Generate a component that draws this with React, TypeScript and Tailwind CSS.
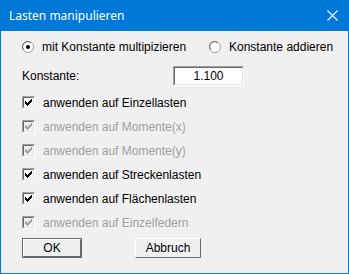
import React from 'react';

const font = { fontFamily: '"Liberation Sans", Arial, sans-serif' };

function CheckMark({ color }: { color: string }) {
  return (
    <svg width="7" height="7" viewBox="0 0 7 7" shapeRendering="crispEdges">
      <path d="M0 2h1v1h1v1h1v-1h1v-1h1v-1h1v-1h1v3h-1v1h-1v1h-1v1h-1v1h-1v-1h-1v-1h-1v-1h-1z" fill={color} />
    </svg>
  );
}

function Checkbox({ label, checked = true, disabled = false }: { label: string; checked?: boolean; disabled?: boolean }) {
  return (
    <div className="flex items-center h-[13px]">
      <div className="w-[13px] h-[13px] border border-[#a0a0a0] border-r-white border-b-white">
        <div
          className={`w-full h-full border border-[#696969] border-r-[#e3e3e3] border-b-[#e3e3e3] flex items-center justify-center ${
            disabled ? 'bg-[#f0f0f0]' : 'bg-white'
          }`}
        >
          {checked && <CheckMark color={disabled ? '#a0a0a0' : '#000'} />}
        </div>
      </div>
      <span className={`ml-[8px] text-[12px] leading-none ${disabled ? 'text-[#a0a0a0]' : 'text-black'}`}>{label}</span>
    </div>
  );
}

function Radio({ label, selected = false }: { label: string; selected?: boolean }) {
  return (
    <div className="flex items-center h-[12px]">
      <svg width="12" height="12" viewBox="0 0 12 12">
        <circle cx="6" cy="6" r="5.5" fill="#fff" stroke="#a0a0a0" />
        <path d="M1.5 8.5 A5 5 0 0 1 8.5 1.5" fill="none" stroke="#696969" />
        {selected && <circle cx="6" cy="6" r="2" fill="#000" />}
      </svg>
      <span className="ml-[8px] text-[12px] leading-none text-black">{label}</span>
    </div>
  );
}

function Button({ children, isDefault = false, width }: { children: React.ReactNode; isDefault?: boolean; width: string }) {
  return (
    <div className={`${width} h-[20px] ${isDefault ? 'border border-[#696969]' : ''}`}>
      <div className="w-full h-full border border-white border-r-[#696969] border-b-[#696969] bg-[#f0f0f0] flex items-center justify-center text-[12px] text-black">
        {children}
      </div>
    </div>
  );
}

export default function App() {
  return (
    <div className="w-[349px] h-[274px] bg-[#0078d7] flex flex-col" style={font}>
      <div className="h-[31px] shrink-0 flex items-center justify-between pl-[9px] pr-[11px]">
        <span className="text-white text-[12px]" style={{ fontFamily: '"Noto Sans", "Open Sans", sans-serif' }}>
          Lasten manipulieren
        </span>
        <svg width="11" height="11" viewBox="0 0 11 11">
          <path d="M0.5 0.5L10.5 10.5M10.5 0.5L0.5 10.5" stroke="#fff" strokeWidth="1.1" />
        </svg>
      </div>
      <div className="flex-1 mx-px mb-px bg-[#f0f0f0] flex flex-col pl-[21px] pt-[10px]">
        <div className="flex items-center">
          <div className="w-[187px]">
            <Radio label="mit Konstante multipizieren" selected />
          </div>
          <Radio label="Konstante addieren" />
        </div>
        <div className="flex items-center mt-[13px] h-[20px]">
          <span className="w-[151px] text-[12px] text-black">Konstante:</span>
          <div className="w-[71px] h-[20px] border border-[#a0a0a0] border-r-white border-b-white">
            <div className="w-full h-full border border-[#696969] border-r-[#e3e3e3] border-b-[#e3e3e3] bg-white flex items-center justify-center text-[12px] text-black">
              1.100
            </div>
          </div>
        </div>
        <div className="flex flex-col gap-[11px] mt-[10px]">
          <Checkbox label="anwenden auf Einzellasten" />
          <Checkbox label="anwenden auf Momente(x)" disabled />
          <Checkbox label="anwenden auf Momente(y)" disabled />
          <Checkbox label="anwenden auf Streckenlasten" />
          <Checkbox label="anwenden auf Flächenlasten" />
          <Checkbox label="anwenden auf Einzelfedern" disabled />
        </div>
        <div className="flex mt-[9px] gap-[53px]">
          <Button isDefault width="w-[60px]">OK</Button>
          <Button width="w-[66px]">Abbruch</Button>
        </div>
      </div>
    </div>
  );
}
